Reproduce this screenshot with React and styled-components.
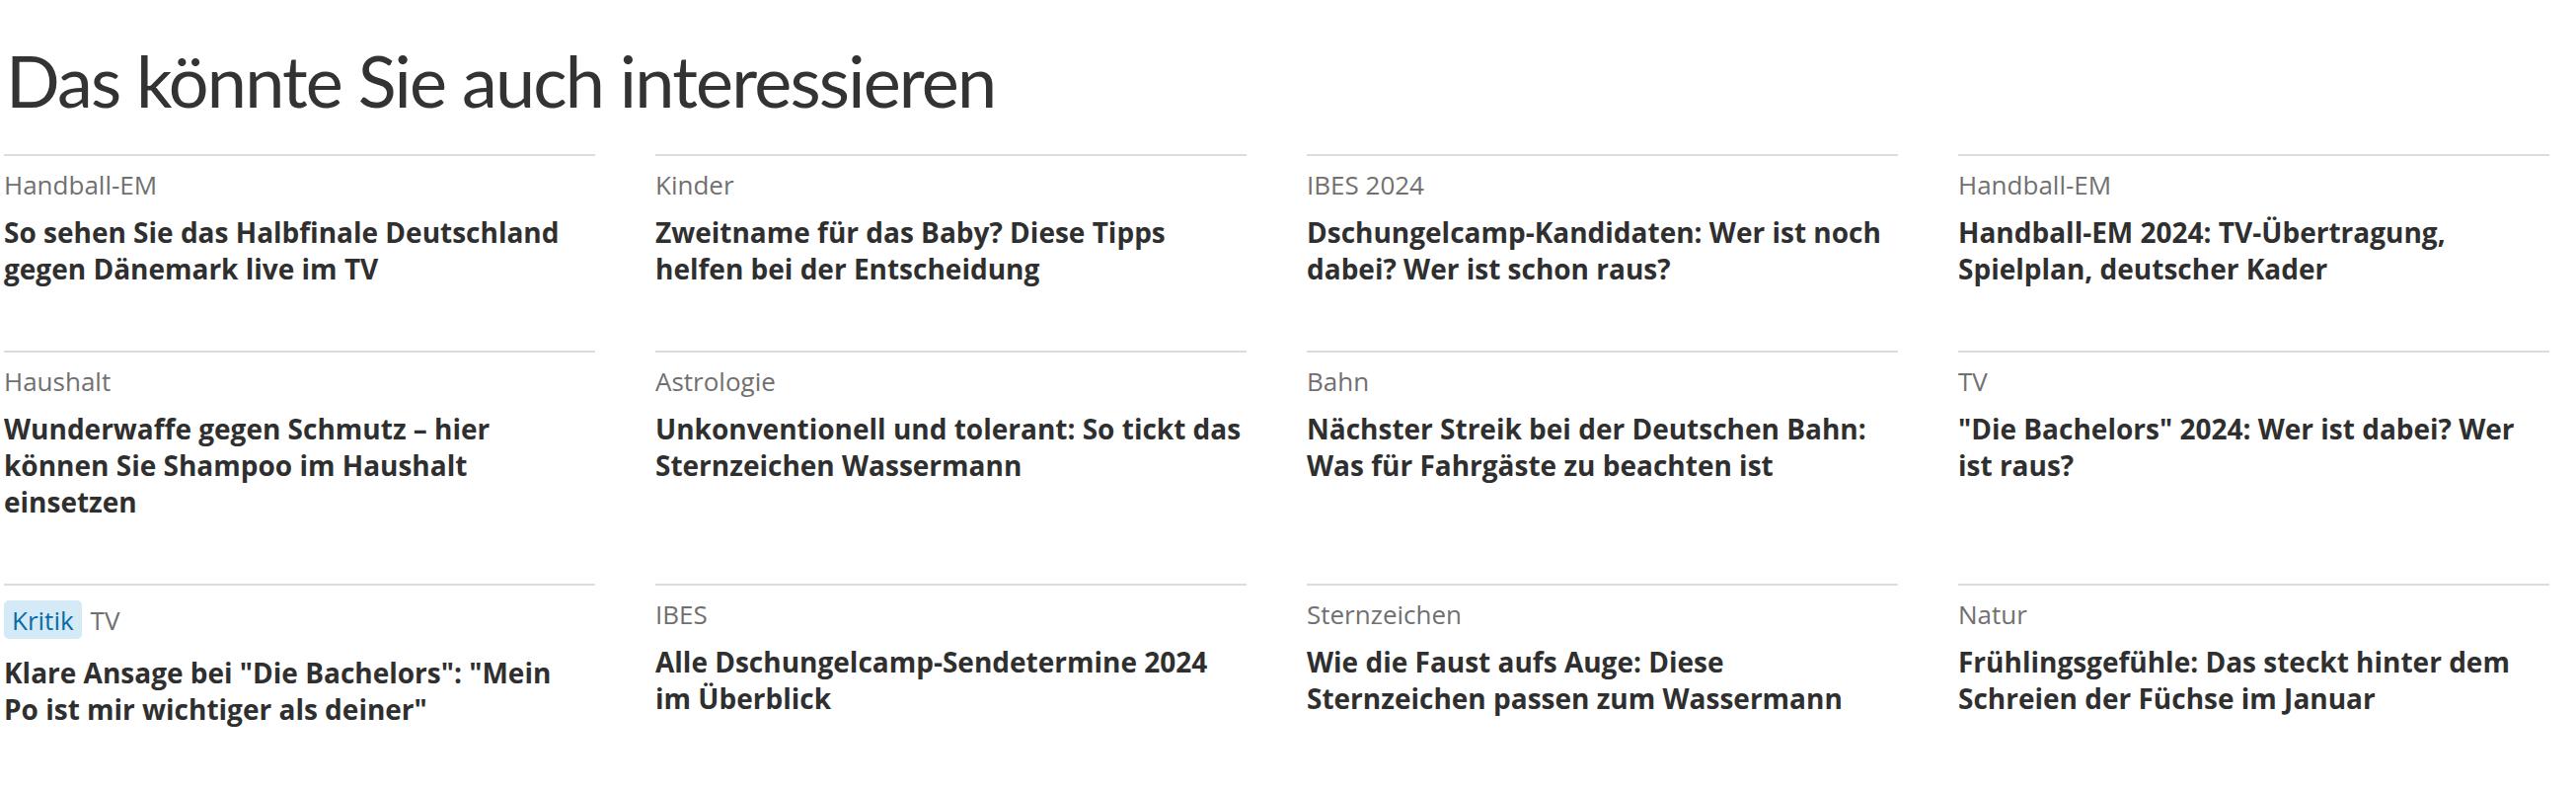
import React from "react";
import styled, { createGlobalStyle } from "styled-components";

const GlobalStyle = createGlobalStyle`
  html, body {
    margin: 0;
    padding: 0;
    background: #ffffff;
  }
  body {
    font-family: "Open Sans", "Noto Sans", "Liberation Sans", sans-serif;
    color: #333333;
  }
`;

const Page = styled.section`
  padding: 37px 0 40px 4px;
  width: 2579px;
`;

const Heading = styled.h2`
  margin: 0 0 31px 2px;
  font-family: "Lato", "Open Sans", sans-serif;
  font-size: 72px;
  line-height: 88px;
  font-weight: 400;
  letter-spacing: -1.8px;
  color: #333333;
`;

const Grid = styled.div`
  display: grid;
  grid-template-columns: repeat(4, 599px);
  column-gap: 61px;
  row-gap: 64px;
`;

const Card = styled.a`
  display: block;
  border-top: 2px solid #dcdcdc;
  padding-top: 11px;
  text-decoration: none;
  color: inherit;
`;

const Kicker = styled.div`
  display: flex;
  align-items: center;
  gap: 9px;
  min-height: 36px;
  font-size: 26px;
  line-height: 36px;
  font-weight: 400;
  color: #707070;
`;

const Badge = styled.span`
  display: inline-flex;
  align-items: center;
  height: 39px;
  margin: 4px 0;
  padding: 0 8px;
  border-radius: 5px;
  background: #d5eaf7;
  color: #0a6aa6;
`;

const Title = styled.h3`
  margin: 12px 0 0 0;
  font-size: 28px;
  line-height: 37px;
  font-weight: 700;
  color: #2f2f2f;
`;

const items = [
  { kicker: "Handball-EM", title: ["So sehen Sie das Halbfinale Deutschland", "gegen Dänemark live im TV"] },
  { kicker: "Kinder", title: ["Zweitname für das Baby? Diese Tipps", "helfen bei der Entscheidung"] },
  { kicker: "IBES 2024", title: ["Dschungelcamp-Kandidaten: Wer ist noch", "dabei? Wer ist schon raus?"] },
  { kicker: "Handball-EM", title: ["Handball-EM 2024: TV-Übertragung,", "Spielplan, deutscher Kader"] },
  { kicker: "Haushalt", title: ["Wunderwaffe gegen Schmutz – hier", "können Sie Shampoo im Haushalt", "einsetzen"] },
  { kicker: "Astrologie", title: ["Unkonventionell und tolerant: So tickt das", "Sternzeichen Wassermann"] },
  { kicker: "Bahn", title: ["Nächster Streik bei der Deutschen Bahn:", "Was für Fahrgäste zu beachten ist"] },
  { kicker: "TV", title: ["\"Die Bachelors\" 2024: Wer ist dabei? Wer", "ist raus?"] },
  { badge: "Kritik", kicker: "TV", title: ["Klare Ansage bei \"Die Bachelors\": \"Mein", "Po ist mir wichtiger als deiner\""] },
  { kicker: "IBES", title: ["Alle Dschungelcamp-Sendetermine 2024", "im Überblick"] },
  { kicker: "Sternzeichen", title: ["Wie die Faust aufs Auge: Diese", "Sternzeichen passen zum Wassermann"] },
  { kicker: "Natur", title: ["Frühlingsgefühle: Das steckt hinter dem", "Schreien der Füchse im Januar"] },
];

export default function App() {
  return (
    <>
      <GlobalStyle />
      <Page>
        <Heading>Das könnte Sie auch interessieren</Heading>
        <Grid>
          {items.map((it, i) => (
            <Card key={i} href="#">
              <Kicker>
                {it.badge && <Badge>{it.badge}</Badge>}
                <span>{it.kicker}</span>
              </Kicker>
              <Title>
                {it.title.map((line, j) => (
                  <React.Fragment key={j}>
                    {j > 0 && <br />}
                    {line}
                  </React.Fragment>
                ))}
              </Title>
            </Card>
          ))}
        </Grid>
      </Page>
    </>
  );
}
